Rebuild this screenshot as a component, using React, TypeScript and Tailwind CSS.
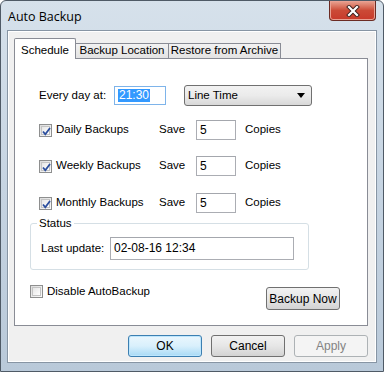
import React from "react";

const font = { fontFamily: '"Liberation Sans", Arial, sans-serif' };

function CheckBox({ checked }: { checked?: boolean }) {
  return (
    <span className="relative inline-flex h-[13px] w-[13px] shrink-0 items-center justify-center border border-[#8e8f8f] bg-gradient-to-br from-[#dcdcdc] to-[#fbfbfb]">
      <span className="h-[9px] w-[9px] border border-[#c4c4c4] bg-gradient-to-br from-[#e6e6e6] to-[#ffffff]" />
      {checked && (
        <svg className="absolute left-[1px] top-[1px]" width="11" height="11" viewBox="0 0 11 11">
          <path d="M2 5.5 L4.3 8.3 L9 2" stroke="#2c4f9e" strokeWidth="1.8" fill="none" />
        </svg>
      )}
    </span>
  );
}

function WinButton({
  children,
  variant = "normal",
  className = "",
}: {
  children: React.ReactNode;
  variant?: "normal" | "default" | "disabled";
  className?: string;
}) {
  const styles = {
    normal: "border-[#707070] bg-gradient-to-b from-[#f2f2f2] via-[#e6e6e6] to-[#d3d3d3] text-black",
    default: "border-[#3c7fb1] bg-gradient-to-b from-[#eaf6fd] via-[#d9f0fc] to-[#a7d9f5] text-black shadow-[inset_0_0_0_1px_#bde6fd]",
    disabled: "border-[#adb2b5] bg-[#f4f4f4] text-[#838383]",
  };
  return (
    <div
      className={`flex items-center justify-center whitespace-nowrap rounded-[3px] border text-[12px] ${styles[variant]} ${className}`}
    >
      {children}
    </div>
  );
}

function TextBox({ value, className = "" }: { value: string; className?: string }) {
  return (
    <div
      className={`flex items-center border border-[#abadb3] border-t-[#a4a7ad] bg-white pl-[3px] text-[12px] text-black ${className}`}
    >
      {value}
    </div>
  );
}

function BackupRow({ label, top }: { label: string; top: string }) {
  return (
    <div className={`flex items-center ${top}`}>
      <div className="flex w-[120px] items-center gap-[4px]">
        <CheckBox checked />
        <span>{label}</span>
      </div>
      <span className="w-[37px]">Save</span>
      <TextBox value="5" className="h-[20px] w-[40px]" />
      <span className="ml-[9px]">Copies</span>
    </div>
  );
}

export default function App() {
  return (
    <div
      style={font}
      className="relative flex h-[372px] w-[384px] flex-col overflow-hidden rounded-t-[6px] border border-[#4f5a66] bg-gradient-to-b from-[#d6e1eb] via-[#c6d4e2] to-[#b9c9d9] text-[11.5px] text-black"
    >
      {/* title bar */}
      <div className="flex h-[29px] shrink-0 items-start justify-between">
        <span
          className="ml-[7px] mt-[7px] text-[12.5px] text-black"
          style={{ fontFamily: '"Open Sans", "Liberation Sans", sans-serif' }}
        >
          Auto Backup
        </span>
        <div className="mr-[7px] flex h-[20px] w-[47px] items-center justify-center rounded-b-[4px] border border-t-0 border-[#6b2b23] bg-gradient-to-b from-[#e8a493] via-[#cb4a36] to-[#c8392a] shadow-[inset_0_0_0_1px_#e9a193]">
          <svg width="14" height="12" viewBox="0 0 14 12">
            <path d="M3 2 L11 10 M11 2 L3 10" stroke="#3a1f1c" strokeWidth="4" strokeLinecap="square" />
            <path d="M3 2 L11 10 M11 2 L3 10" stroke="#ffffff" strokeWidth="2.2" strokeLinecap="square" />
          </svg>
        </div>
      </div>

      {/* client area */}
      <div className="mx-[6px] flex h-[333px] flex-col border border-[#8795a4] bg-[#f0f0f0] px-[6px] pt-[7px] shadow-[inset_0_0_0_1px_#ffffff]">
        {/* tabs */}
        <div className="flex h-[20px] items-end whitespace-nowrap text-[11.5px]">
          <div className="relative z-10 -mb-[1px] flex h-[21px] w-[62px] items-start justify-center rounded-t-[2px] border border-b-0 border-[#898c95] bg-white pt-[3px]">
            Schedule
          </div>
          <div className="flex h-[15px] w-[93px] items-center justify-center border border-b-0 border-l-0 border-[#898c95] bg-gradient-to-b from-[#f2f2f2] to-[#e3e3e3]">
            Backup Location
          </div>
          <div className="flex h-[15px] w-[112px] items-center justify-center border border-b-0 border-l-0 border-[#898c95] bg-gradient-to-b from-[#f2f2f2] to-[#e3e3e3]">
            Restore from Archive
          </div>
        </div>

        {/* tab panel */}
        <div className="flex h-[268px] w-[354px] flex-col border border-[#898c95] bg-white pl-[24px] text-[11.5px]">
          <div className="mt-[26px] flex items-center">
            <span className="w-[75px]">Every day at:</span>
            <div className="flex h-[19px] w-[52px] items-center border border-[#7eb4ea] bg-white pl-[3px] text-[12px]">
              <span className="bg-[#3399ff] px-[1px] leading-[13px] text-white">21:30</span>
            </div>
            <div className="ml-[18px] flex h-[21px] w-[128px] items-center justify-between rounded-[3px] border border-[#707070] bg-gradient-to-b from-[#f2f2f2] via-[#ebebeb] to-[#d8d8d8] pl-[3px] pr-[6px]">
              <span>Line Time</span>
              <svg width="8" height="5" viewBox="0 0 8 5">
                <path d="M0 0 H8 L4 5 Z" fill="#000" />
              </svg>
            </div>
          </div>

          <BackupRow label="Daily Backups" top="mt-[14px]" />
          <BackupRow label="Weekly Backups" top="mt-[16px]" />
          <BackupRow label="Monthly Backups" top="mt-[17px]" />

          {/* status group */}
          <div className="relative ml-[-9px] mt-[10px] h-[47px] w-[279px] rounded-[3px] border border-[#d5dfe5]">
            <span className="absolute -top-[8px] left-[6px] bg-white px-[2px] leading-[14px]">Status</span>
            <div className="mt-[13px] flex items-center pl-[10px]">
              <span className="w-[69px]">Last update:</span>
              <TextBox value="02-08-16 12:34" className="h-[23px] w-[184px] pb-[2px]" />
            </div>
          </div>

          <div className="ml-[-9px] mt-[13px] flex items-start justify-between pr-[27px]">
            <div className="flex items-center gap-[4px]">
              <CheckBox />
              <span>Disable AutoBackup</span>
            </div>
            <WinButton className="mt-[4px] h-[23px] w-[74px]">Backup Now</WinButton>
          </div>
        </div>

        {/* dialog buttons */}
        <div className="mt-[9px] flex justify-end gap-[9px] pr-[2px]">
          <WinButton variant="default" className="h-[22px] w-[74px]">OK</WinButton>
          <WinButton className="h-[22px] w-[74px]">Cancel</WinButton>
          <WinButton variant="disabled" className="h-[22px] w-[74px]">Apply</WinButton>
        </div>
      </div>
    </div>
  );
}
